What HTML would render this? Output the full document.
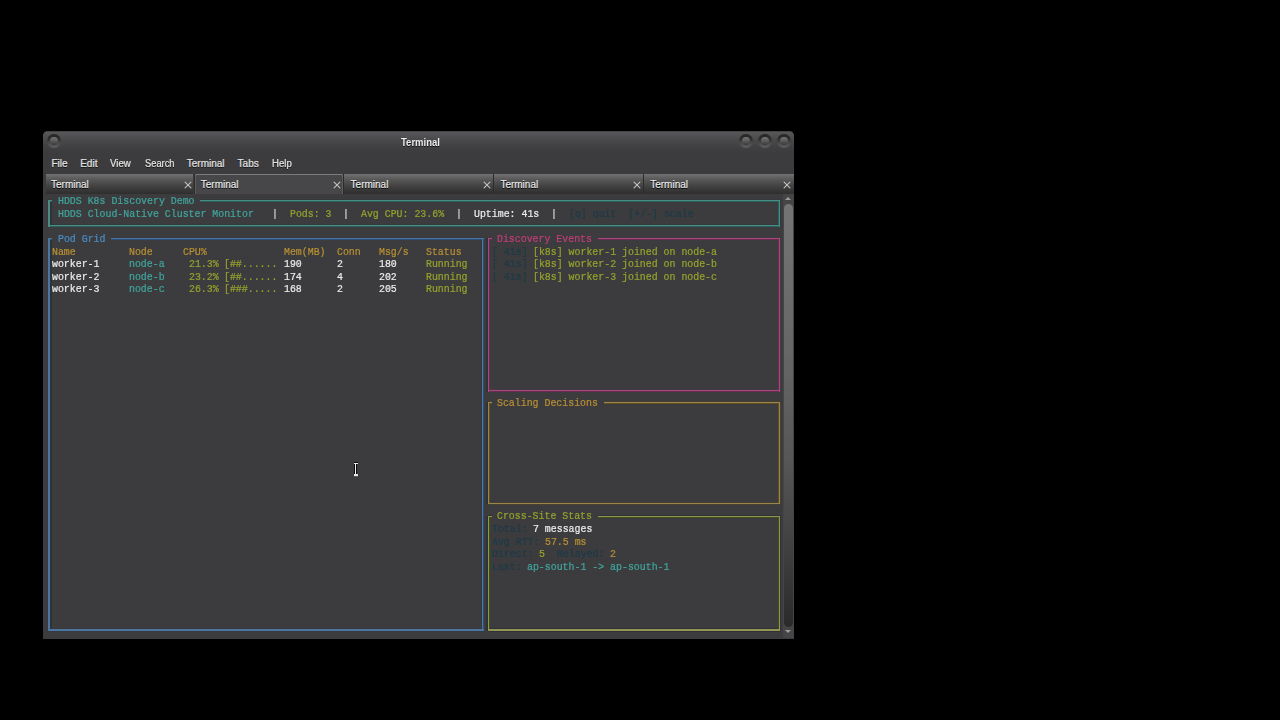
<!DOCTYPE html>
<html><head><meta charset="utf-8"><style>
html,body{margin:0;padding:0;background:#000;width:1280px;height:720px;overflow:hidden;position:relative}
.win{position:absolute;left:43px;top:131px;width:751px;height:508px;background:#3c3c3e;border-radius:5px 5px 0 0;overflow:hidden}
.titlebar{position:absolute;left:43px;top:130.6px;width:751px;height:24px;border-radius:5px 5px 0 0;background:linear-gradient(#303030 0,#58585a 1px,#4c4c4e 7px,#404042 16px,#3c3c3e 22px)}
.title{position:absolute;left:401px;top:136.8px;transform-origin:0 0;transform:scaleX(0.95);font:bold 10px "Liberation Sans",sans-serif;color:#ececec;text-shadow:0 1px 0 #111;white-space:pre}
.mi{position:absolute;top:157.8px;transform-origin:0 0;-webkit-text-stroke:0.2px currentColor;font:10px "Liberation Sans",sans-serif;color:#e4e4e4;text-shadow:0 1px 0 #151515;white-space:pre}
.btn{position:absolute;width:13.8px;height:13.8px;border-radius:50%;background:linear-gradient(#262626,#2e2e2e 35%,#4a4a4a 65%,#5e5e5e)}
.btn:after{content:"";position:absolute;left:2.9px;top:2.6px;width:8px;height:8px;border-radius:50%;background:linear-gradient(#767676,#5a5a5a 50%,#383838)}
.tab{position:absolute;top:174px;height:19.7px;background:linear-gradient(#717171,#5a5a5a 25%,#424242 60%,#2e2e2e)}
.tab.act{top:174px;height:19.7px;background:#474749;box-shadow:inset 0 1px 0 #7c7c7c,inset 1px 0 0 #5c5c5c,inset -1px 0 0 #5c5c5c;border-radius:2px 2px 0 0}
.tt{position:absolute;top:179.0px;-webkit-text-stroke:0.15px currentColor;font:10px "Liberation Sans",sans-serif;color:#ececec;text-shadow:0 1px 0 #000;white-space:pre}
.x{position:absolute}
.sb{position:absolute;left:783px;top:194.2px;width:10.6px;height:444px;background:#454547}
.thumb{position:absolute;left:783.6px;top:203.5px;width:9.4px;height:423px;border-radius:4.7px;background:linear-gradient(#747474,#666 35%,#575757 60%,#3c3c3c 85%,#2a2a2a)}
.arr{position:absolute;width:0;height:0;border-left:3.2px solid transparent;border-right:3.2px solid transparent}
.t{position:absolute;white-space:pre;font-family:"Liberation Mono",monospace;font-size:12.2px;line-height:12.615px;height:12.615px;transform-origin:0 0;transform:scale(0.8115,0.92);-webkit-text-stroke:0.25px currentColor}
.l{position:absolute}
.txt{position:absolute;left:0;top:0;width:1280px;height:720px;filter:blur(0.3px)}
</style></head><body>
<div class="win"></div>
<div class="titlebar"></div>
<div class="title">Terminal</div>
<div class="btn" style="left:47.0px;top:134.4px"></div><div class="btn" style="left:739.0px;top:134.4px"></div><div class="btn" style="left:758.2px;top:134.4px"></div><div class="btn" style="left:777.4px;top:134.4px"></div>
<span class="mi" style="left:51.4px;transform:scaleX(1)">File</span>
<span class="mi" style="left:80.2px;transform:scaleX(1)">Edit</span>
<span class="mi" style="left:109.9px;transform:scaleX(0.97)">View</span>
<span class="mi" style="left:144.5px;transform:scaleX(0.93)">Search</span>
<span class="mi" style="left:186.8px;transform:scaleX(1)">Terminal</span>
<span class="mi" style="left:237.6px;transform:scaleX(1)">Tabs</span>
<span class="mi" style="left:271.8px;transform:scaleX(0.96)">Help</span>
<div class="l" style="left:193.5px;top:174px;width:1px;height:19.7px;background:#2c2c2c"></div>
<div class="tab" style="left:45.8px;width:147.7px"></div>
<span class="tt" style="left:51.0px">Terminal</span>
<svg class="x" style="left:183.5px;top:180.6px" width="8" height="8" viewBox="0 0 8 8"><path d="M1.1 1.2 L6.9 6.8 M6.9 1.2 L1.1 6.8" stroke="#c0c0b8" stroke-width="1.15" stroke-linecap="round"/></svg>
<div class="l" style="left:343.3px;top:174px;width:1px;height:19.7px;background:#2c2c2c"></div>
<div class="tab act" style="left:194.5px;width:148.8px"></div>
<span class="tt" style="left:200.8px">Terminal</span>
<svg class="x" style="left:333.3px;top:180.6px" width="8" height="8" viewBox="0 0 8 8"><path d="M1.1 1.2 L6.9 6.8 M6.9 1.2 L1.1 6.8" stroke="#c0c0b8" stroke-width="1.15" stroke-linecap="round"/></svg>
<div class="l" style="left:493.1px;top:174px;width:1px;height:19.7px;background:#2c2c2c"></div>
<div class="tab" style="left:344.3px;width:148.8px"></div>
<span class="tt" style="left:350.6px">Terminal</span>
<svg class="x" style="left:483.1px;top:180.6px" width="8" height="8" viewBox="0 0 8 8"><path d="M1.1 1.2 L6.9 6.8 M6.9 1.2 L1.1 6.8" stroke="#c0c0b8" stroke-width="1.15" stroke-linecap="round"/></svg>
<div class="l" style="left:642.9px;top:174px;width:1px;height:19.7px;background:#2c2c2c"></div>
<div class="tab" style="left:494.1px;width:148.8px"></div>
<span class="tt" style="left:500.4px">Terminal</span>
<svg class="x" style="left:632.9px;top:180.6px" width="8" height="8" viewBox="0 0 8 8"><path d="M1.1 1.2 L6.9 6.8 M6.9 1.2 L1.1 6.8" stroke="#c0c0b8" stroke-width="1.15" stroke-linecap="round"/></svg>
<div class="tab" style="left:643.9px;width:149.9px"></div>
<span class="tt" style="left:650.2px">Terminal</span>
<svg class="x" style="left:782.7px;top:180.6px" width="8" height="8" viewBox="0 0 8 8"><path d="M1.1 1.2 L6.9 6.8 M6.9 1.2 L1.1 6.8" stroke="#c0c0b8" stroke-width="1.15" stroke-linecap="round"/></svg>
<div class="sb"></div>
<div class="arr" style="left:785.2px;top:197.2px;border-bottom:3.5px solid #9c9c9c"></div>
<div class="thumb"></div>
<div class="arr" style="left:785.2px;top:630.3px;border-top:3.5px solid #9c9c9c"></div>
<div class="l" style="left:47px;top:200px;width:1px;height:27px;background:#34393c"></div>
<div class="l" style="left:780px;top:200px;width:1px;height:27px;background:#34393c"></div>
<div class="l" style="left:48px;top:224px;width:732px;height:1px;background:#34393c"></div>
<div class="l" style="left:48px;top:199px;width:4px;height:1px;background:#34393c"></div>
<div class="l" style="left:200px;top:199px;width:580px;height:1px;background:#34393c"></div>
<div class="l" style="left:47px;top:238px;width:1px;height:393px;background:#37393f"></div>
<div class="l" style="left:481px;top:238px;width:1px;height:393px;background:#37393f"></div>
<div class="l" style="left:48px;top:628px;width:436px;height:1px;background:#37393f"></div>
<div class="l" style="left:48px;top:631px;width:436px;height:1px;background:#37393f"></div>
<div class="l" style="left:48px;top:237px;width:4px;height:1px;background:#37393f"></div>
<div class="l" style="left:111px;top:237px;width:373px;height:1px;background:#37393f"></div>
<div class="l" style="left:780px;top:238px;width:1px;height:154px;background:#433a42"></div>
<div class="l" style="left:488px;top:389px;width:292px;height:1px;background:#433a42"></div>
<div class="l" style="left:488px;top:237px;width:4px;height:1px;background:#433a42"></div>
<div class="l" style="left:598px;top:237px;width:182px;height:1px;background:#433a42"></div>
<div class="l" style="left:780px;top:402px;width:1px;height:102px;background:#45402f"></div>
<div class="l" style="left:488px;top:502px;width:292px;height:1px;background:#45402f"></div>
<div class="l" style="left:488px;top:504px;width:292px;height:1px;background:#45402f"></div>
<div class="l" style="left:488px;top:401px;width:4px;height:1px;background:#45402f"></div>
<div class="l" style="left:604px;top:401px;width:176px;height:1px;background:#45402f"></div>
<div class="l" style="left:780px;top:516px;width:1px;height:115px;background:#34303a"></div>
<div class="l" style="left:488px;top:628px;width:292px;height:1px;background:#34303a"></div>
<div class="l" style="left:488px;top:631px;width:292px;height:1px;background:#34303a"></div>
<div class="l" style="left:488px;top:515px;width:4px;height:1px;background:#34303a"></div>
<div class="l" style="left:598px;top:515px;width:182px;height:1px;background:#34303a"></div>
<div class="l" style="left:50px;top:200px;width:1px;height:27px;background:#2c3437"></div>
<div class="l" style="left:51px;top:200px;width:1px;height:27px;background:#2c3437"></div>
<div class="l" style="left:50px;top:238px;width:1px;height:393px;background:#2c3437"></div>
<div class="l" style="left:51px;top:238px;width:1px;height:393px;background:#2c3437"></div>
<div class="l" style="left:486px;top:238px;width:1px;height:154px;background:#2c3437"></div>
<div class="l" style="left:487px;top:238px;width:1px;height:154px;background:#2c3437"></div>
<div class="l" style="left:486px;top:402px;width:1px;height:102px;background:#2c3437"></div>
<div class="l" style="left:487px;top:402px;width:1px;height:102px;background:#2c3437"></div>
<div class="l" style="left:486px;top:516px;width:1px;height:115px;background:#2c3437"></div>
<div class="l" style="left:487px;top:516px;width:1px;height:115px;background:#2c3437"></div>
<div class="l" style="left:778px;top:200px;width:1px;height:27px;background:#28625e"></div>
<div class="l" style="left:48px;top:226px;width:732px;height:1px;background:#28625e"></div>
<div class="l" style="left:48px;top:201px;width:4px;height:1px;background:#28625e"></div>
<div class="l" style="left:200px;top:201px;width:580px;height:1px;background:#28625e"></div>
<div class="l" style="left:483px;top:238px;width:1px;height:393px;background:#2c4e74"></div>
<div class="l" style="left:48px;top:239px;width:4px;height:1px;background:#2c4e74"></div>
<div class="l" style="left:111px;top:239px;width:373px;height:1px;background:#2c4e74"></div>
<div class="l" style="left:489px;top:238px;width:1px;height:154px;background:#6c2a52"></div>
<div class="l" style="left:778px;top:238px;width:1px;height:154px;background:#6c2a52"></div>
<div class="l" style="left:488px;top:391px;width:292px;height:1px;background:#6c2a52"></div>
<div class="l" style="left:488px;top:239px;width:4px;height:1px;background:#6c2a52"></div>
<div class="l" style="left:598px;top:239px;width:182px;height:1px;background:#6c2a52"></div>
<div class="l" style="left:489px;top:402px;width:1px;height:102px;background:#60501e"></div>
<div class="l" style="left:778px;top:402px;width:1px;height:102px;background:#60501e"></div>
<div class="l" style="left:488px;top:403px;width:4px;height:1px;background:#60501e"></div>
<div class="l" style="left:604px;top:403px;width:176px;height:1px;background:#60501e"></div>
<div class="l" style="left:489px;top:516px;width:1px;height:115px;background:#434e16"></div>
<div class="l" style="left:778px;top:516px;width:1px;height:115px;background:#434e16"></div>
<div class="l" style="left:488px;top:517px;width:4px;height:1px;background:#434e16"></div>
<div class="l" style="left:598px;top:517px;width:182px;height:1px;background:#434e16"></div>
<div class="l" style="left:48px;top:200px;width:1px;height:27px;background:#4c8a84"></div>
<div class="l" style="left:49px;top:200px;width:1px;height:27px;background:#4c8a84"></div>
<div class="l" style="left:779px;top:200px;width:1px;height:27px;background:#4c8a84"></div>
<div class="l" style="left:48px;top:225px;width:732px;height:1px;background:#4c8a84"></div>
<div class="l" style="left:48px;top:200px;width:4px;height:1px;background:#4c8a84"></div>
<div class="l" style="left:200px;top:200px;width:580px;height:1px;background:#4c8a84"></div>
<div class="l" style="left:48px;top:238px;width:1px;height:393px;background:#4c76a2"></div>
<div class="l" style="left:49px;top:238px;width:1px;height:393px;background:#4c76a2"></div>
<div class="l" style="left:482px;top:238px;width:1px;height:393px;background:#4c76a2"></div>
<div class="l" style="left:48px;top:629px;width:436px;height:1px;background:#4c76a2"></div>
<div class="l" style="left:48px;top:630px;width:436px;height:1px;background:#4c76a2"></div>
<div class="l" style="left:48px;top:238px;width:4px;height:1px;background:#4c76a2"></div>
<div class="l" style="left:111px;top:238px;width:373px;height:1px;background:#4c76a2"></div>
<div class="l" style="left:488px;top:238px;width:1px;height:154px;background:#a44a7a"></div>
<div class="l" style="left:779px;top:238px;width:1px;height:154px;background:#a44a7a"></div>
<div class="l" style="left:488px;top:390px;width:292px;height:1px;background:#a44a7a"></div>
<div class="l" style="left:488px;top:238px;width:4px;height:1px;background:#a44a7a"></div>
<div class="l" style="left:598px;top:238px;width:182px;height:1px;background:#a44a7a"></div>
<div class="l" style="left:488px;top:402px;width:1px;height:102px;background:#9c8450"></div>
<div class="l" style="left:779px;top:402px;width:1px;height:102px;background:#9c8450"></div>
<div class="l" style="left:488px;top:503px;width:292px;height:1px;background:#9c8450"></div>
<div class="l" style="left:488px;top:402px;width:4px;height:1px;background:#9c8450"></div>
<div class="l" style="left:604px;top:402px;width:176px;height:1px;background:#9c8450"></div>
<div class="l" style="left:488px;top:516px;width:1px;height:115px;background:#8e9652"></div>
<div class="l" style="left:779px;top:516px;width:1px;height:115px;background:#8e9652"></div>
<div class="l" style="left:488px;top:629px;width:292px;height:1px;background:#8e9652"></div>
<div class="l" style="left:488px;top:630px;width:292px;height:1px;background:#8e9652"></div>
<div class="l" style="left:488px;top:516px;width:4px;height:1px;background:#8e9652"></div>
<div class="l" style="left:598px;top:516px;width:182px;height:1px;background:#8e9652"></div>
<div class="txt">
<span class="t" style="left:57.88px;top:196.07px;color:#40a59d">HDDS K8s Discovery Demo</span>
<span class="t" style="left:57.88px;top:233.92px;color:#4a8cc4">Pod Grid</span>
<span class="t" style="left:497.44px;top:233.92px;color:#c03e78">Discovery Events</span>
<span class="t" style="left:497.44px;top:397.92px;color:#b88f34">Scaling Decisions</span>
<span class="t" style="left:497.44px;top:511.45px;color:#96a22c">Cross-Site Stats</span>
<span class="t" style="left:57.88px;top:208.69px;color:#40a59d">HDDS Cloud-Native Cluster Monitor</span>
<span class="t" style="left:271.72px;top:208.69px;color:#dcdcdc">|</span>
<span class="t" style="left:289.54px;top:208.69px;color:#96a22c">Pods: 3</span>
<span class="t" style="left:343.00px;top:208.69px;color:#dcdcdc">|</span>
<span class="t" style="left:360.82px;top:208.69px;color:#96a22c">Avg CPU: 23.6%</span>
<span class="t" style="left:455.86px;top:208.69px;color:#dcdcdc">|</span>
<span class="t" style="left:473.68px;top:208.69px;color:#ececec">Uptime: 41s</span>
<span class="t" style="left:550.90px;top:208.69px;color:#dcdcdc">|</span>
<span class="t" style="left:568.72px;top:208.69px;color:#1c3a48">[q] quit  [+/-] scale</span>
<span class="t" style="left:51.94px;top:246.53px;color:#b88f34">Name</span>
<span class="t" style="left:129.16px;top:246.53px;color:#b88f34">Node</span>
<span class="t" style="left:182.62px;top:246.53px;color:#b88f34">CPU%</span>
<span class="t" style="left:283.60px;top:246.53px;color:#b88f34">Mem(MB)</span>
<span class="t" style="left:337.06px;top:246.53px;color:#b88f34">Conn</span>
<span class="t" style="left:378.64px;top:246.53px;color:#b88f34">Msg/s</span>
<span class="t" style="left:426.16px;top:246.53px;color:#b88f34">Status</span>
<span class="t" style="left:51.94px;top:259.15px;color:#ececec">worker-1</span>
<span class="t" style="left:129.16px;top:259.15px;color:#40a59d">node-a</span>
<span class="t" style="left:188.56px;top:259.15px;color:#96a22c">21.3%</span>
<span class="t" style="left:224.20px;top:259.15px;color:#96a22c">[##......</span>
<span class="t" style="left:283.60px;top:259.15px;color:#ececec">190</span>
<span class="t" style="left:337.06px;top:259.15px;color:#ececec">2</span>
<span class="t" style="left:378.64px;top:259.15px;color:#ececec">180</span>
<span class="t" style="left:426.16px;top:259.15px;color:#96a22c">Running</span>
<span class="t" style="left:51.94px;top:271.76px;color:#ececec">worker-2</span>
<span class="t" style="left:129.16px;top:271.76px;color:#40a59d">node-b</span>
<span class="t" style="left:188.56px;top:271.76px;color:#96a22c">23.2%</span>
<span class="t" style="left:224.20px;top:271.76px;color:#96a22c">[##......</span>
<span class="t" style="left:283.60px;top:271.76px;color:#ececec">174</span>
<span class="t" style="left:337.06px;top:271.76px;color:#ececec">4</span>
<span class="t" style="left:378.64px;top:271.76px;color:#ececec">202</span>
<span class="t" style="left:426.16px;top:271.76px;color:#96a22c">Running</span>
<span class="t" style="left:51.94px;top:284.38px;color:#ececec">worker-3</span>
<span class="t" style="left:129.16px;top:284.38px;color:#40a59d">node-c</span>
<span class="t" style="left:188.56px;top:284.38px;color:#96a22c">26.3%</span>
<span class="t" style="left:224.20px;top:284.38px;color:#96a22c">[###.....</span>
<span class="t" style="left:283.60px;top:284.38px;color:#ececec">168</span>
<span class="t" style="left:337.06px;top:284.38px;color:#ececec">2</span>
<span class="t" style="left:378.64px;top:284.38px;color:#ececec">205</span>
<span class="t" style="left:426.16px;top:284.38px;color:#96a22c">Running</span>
<span class="t" style="left:491.50px;top:246.53px;color:#1c3a48">[ 41s]</span>
<span class="t" style="left:533.08px;top:246.53px;color:#96a22c">[k8s] worker-1 joined on node-a</span>
<span class="t" style="left:491.50px;top:259.15px;color:#1c3a48">[ 41s]</span>
<span class="t" style="left:533.08px;top:259.15px;color:#96a22c">[k8s] worker-2 joined on node-b</span>
<span class="t" style="left:491.50px;top:271.76px;color:#1c3a48">[ 41s]</span>
<span class="t" style="left:533.08px;top:271.76px;color:#96a22c">[k8s] worker-3 joined on node-c</span>
<span class="t" style="left:491.50px;top:524.07px;color:#1c3a48">Total:</span>
<span class="t" style="left:533.08px;top:524.07px;color:#ececec">7 messages</span>
<span class="t" style="left:491.50px;top:536.68px;color:#1c3a48">Avg RTT:</span>
<span class="t" style="left:544.96px;top:536.68px;color:#b88f34">57.5 ms</span>
<span class="t" style="left:491.50px;top:549.30px;color:#1c3a48">Direct:</span>
<span class="t" style="left:539.02px;top:549.30px;color:#96a22c">5</span>
<span class="t" style="left:556.84px;top:549.30px;color:#1c3a48">Relayed:</span>
<span class="t" style="left:610.30px;top:549.30px;color:#b88f34">2</span>
<span class="t" style="left:491.50px;top:561.91px;color:#1c3a48">Last:</span>
<span class="t" style="left:527.14px;top:561.91px;color:#40a59d">ap-south-1 -&gt; ap-south-1</span>
</div>
<div class="l" style="left:353.6px;top:461.8px;width:4.2px;height:1.2px;background:#0c0c0c"></div>
<div class="l" style="left:353.8px;top:463px;width:4.4px;height:1.4px;background:#ececec"></div>
<div class="l" style="left:354px;top:464.4px;width:1px;height:10px;background:#0a0a0a"></div>
<div class="l" style="left:356.4px;top:464.4px;width:1px;height:10px;background:#0a0a0a"></div>
<div class="l" style="left:355px;top:464.4px;width:1.4px;height:10px;background:#f0f0f0"></div>
<div class="l" style="left:353.8px;top:474.3px;width:4.4px;height:1.5px;background:#e4e4e4"></div>
<div class="l" style="left:354px;top:475.8px;width:4px;height:1.4px;background:#5e5e5e"></div>
</body></html>
